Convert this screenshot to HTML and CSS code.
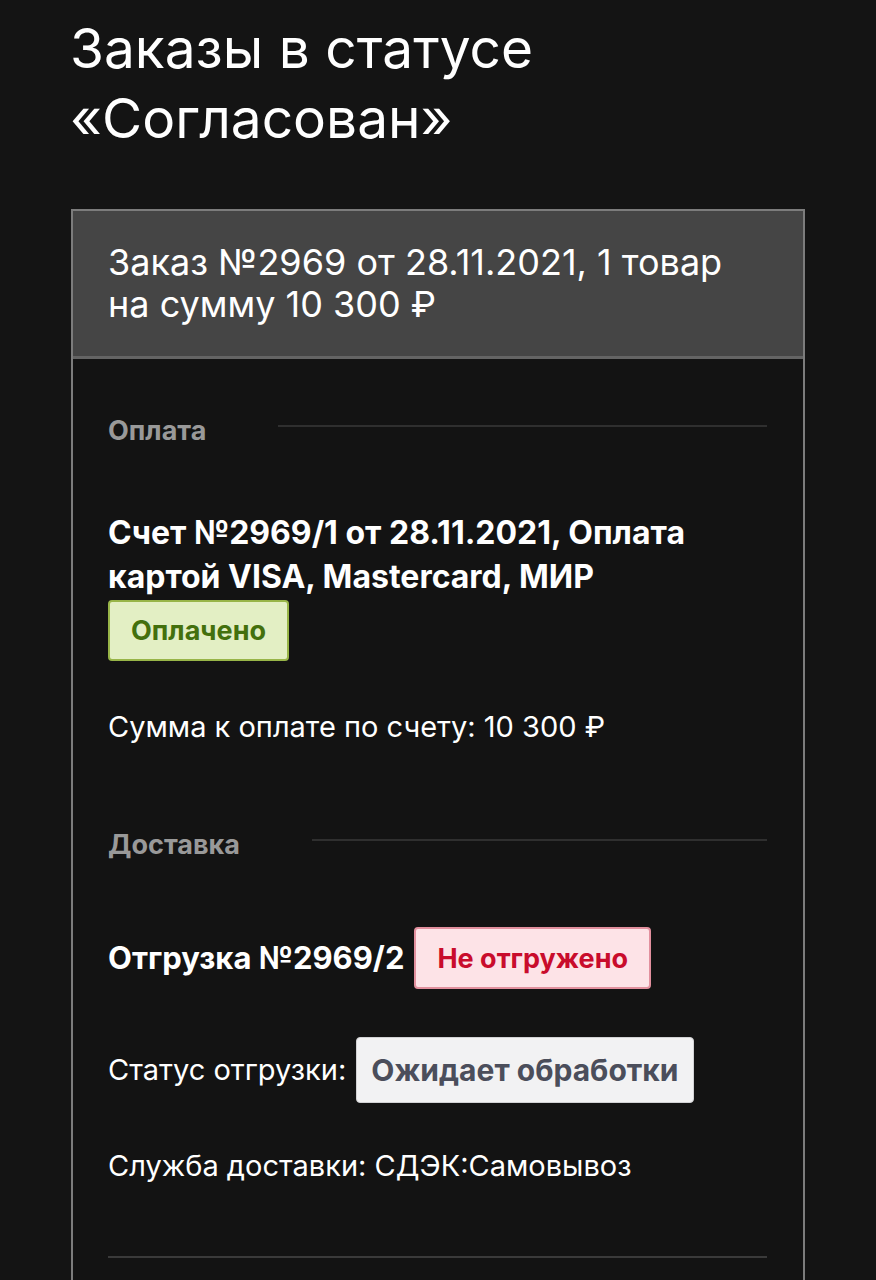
FILE: index.html
```html
<!DOCTYPE html>
<html lang="ru">
<head>
<meta charset="utf-8">
<title>Заказы в статусе «Согласован»</title>
<link rel="stylesheet" href="styles.css">
</head>
<body>
<main class="page">
  <h1 class="page-title">Заказы в статусе<br>«Согласован»</h1>
  <section class="order">
    <header class="order-head">Заказ №2969 от 28.11.2021, 1 товар<br>на сумму 10 300 ₽</header>
    <div class="order-body">
      <div class="section-head"><span class="section-label">Оплата</span><span class="section-rule"></span></div>
      <div class="invoice-title">Счет №2969/1 от 28.11.2021, Оплата<br>картой VISA, Mastercard, МИР</div>
      <div class="badge badge-paid">Оплачено</div>
      <p class="text sum">Сумма к оплате по счету: 10 300 ₽</p>

      <div class="section-head section-delivery"><span class="section-label">Доставка</span><span class="section-rule"></span></div>
      <div class="row shipment">
        <span class="shipment-title">Отгрузка №2969/2</span>
        <span class="badge badge-no">Не отгружено</span>
      </div>
      <div class="row status">
        <span class="text">Статус отгрузки:</span>
        <span class="badge badge-wait">Ожидает обработки</span>
      </div>
      <p class="text service">Служба доставки: СДЭК:Самовывоз</p>
      <div class="divider"></div>
      <div class="spacer"></div>
    </div>
  </section>
</main>
</body>
</html>
```

FILE: styles.css
```css
* { box-sizing: border-box; }
html, body {
  margin: 0;
  padding: 0;
  background: #141414;
}
body {
  font-family: Inter, "Liberation Sans", Arial, sans-serif;
  color: #ffffff;
}
.page {
  padding: 0 71px;
}
.page-title {
  margin: 13px 0 0 -1px;
  font-size: 55px;
  line-height: 70px;
  font-weight: 400;
}
.order {
  margin-top: 56px;
  border: 2px solid #7c7c7c;
  border-bottom: none;
}
.order-head {
  background: #454545;
  border-bottom: 3px solid #646464;
  padding: 30px 30px 31px 35px;
  font-size: 36px;
  line-height: 42px;
  white-space: nowrap;
}
.order-body {
  background: #131313;
  padding: 57px 36px 0 35px;
}
.section-head {
  display: flex;
  align-items: center;
  gap: 72px;
}
.section-label {
  font-size: 27px;
  line-height: 30px;
  font-weight: 700;
  color: #999999;
}
.section-rule {
  flex: 1;
  height: 2px;
  background: #2f2f2f;
  margin-bottom: 10px;
}
.invoice-title {
  margin-top: 65px;
  font-size: 32px;
  line-height: 44px;
  font-weight: 700;
  white-space: nowrap;
}
.badge {
  display: flex;
  align-items: center;
  width: fit-content;
  font-size: 27px;
  font-weight: 700;
  border-radius: 4px;
  white-space: nowrap;
}
.badge-paid {
  margin-top: 1px;
  height: 61px;
  padding: 0 21px;
  background: #e3efc4;
  border: 2px solid #98b548;
  color: #43700d;
}
.badge-no {
  height: 62px;
  padding: 0 21px;
  background: #fde3e7;
  border: 2px solid #e2909e;
  color: #c90c2c;
}
.badge-wait {
  height: 66px;
  padding: 0 14px;
  background: #f2f2f3;
  border: 1px solid #d2d2d4;
  color: #4b4e5b;
  font-size: 30px;
}
.text {
  font-size: 29px;
  line-height: 36px;
  margin: 0;
}
.sum {
  margin-top: 48px;
}
.section-delivery {
  margin-top: 85px;
}
.row {
  display: flex;
  align-items: center;
  gap: 10px;
}
.shipment {
  margin-top: 67px;
}
.shipment-title {
  font-size: 31px;
  font-weight: 700;
  line-height: 36px;
}
.status {
  margin-top: 48px;
}
.service {
  margin-top: 45px;
}
.divider {
  margin-top: 72px;
  height: 2px;
  background: #3a3a3a;
}
.spacer {
  height: 80px;
}
```
